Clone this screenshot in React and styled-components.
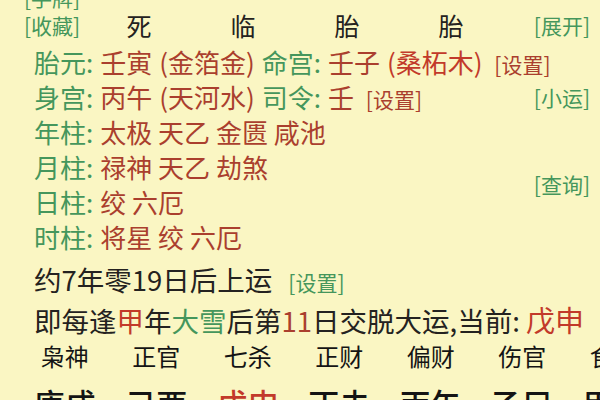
import React from 'react'
import styled, { createGlobalStyle } from 'styled-components'

const GlobalStyle = createGlobalStyle`
  html, body {
    margin: 0;
    padding: 0;
  }
  body {
    background: #faf6c3;
    font-family: "Noto Sans CJK SC", "Noto Sans", sans-serif;
  }
`

const GREEN = '#45965c'
const RED = '#aa3f2e'
const BRIGHT_RED = '#c23a2a'
const DARK = '#242220'

const Page = styled.div`
  width: 600px;
  height: 400px;
  overflow: hidden;
  background: #faf6c3;
  color: ${DARK};
`

const CutLine = styled.div`
  margin-top: -16px;
  padding-left: 24px;
  height: 28px;
  line-height: 26px;
  font-size: 21px;
  color: ${GREEN};
`

const TopRow = styled.div`
  display: grid;
  grid-template-columns: 63px repeat(4, 104px) 1fr;
  align-items: center;
  height: 26px;
  line-height: 26px;
  padding: 0 10px 0 24px;
`

const TopCell = styled.div`
  font-size: 25px;
  text-align: center;
`

const Link = styled.span`
  font-size: 21px;
  color: ${p => (p.$red ? RED : GREEN)};
  white-space: nowrap;
`

const RightLink = styled(Link)`
  justify-self: end;
`

const InfoRow = styled.div`
  display: flex;
  align-items: center;
  justify-content: space-between;
  height: 35px;
  padding: 0 10px 0 34px;
  margin-top: ${p => p.$gap || 0}px;
`

const Line = styled.div`
  display: flex;
  align-items: baseline;
  gap: 7px;
  font-size: 26px;
  white-space: nowrap;
`

const Label = styled.span`
  color: ${GREEN};
`

const Val = styled.span`
  color: ${p => (p.$bright ? BRIGHT_RED : RED)};
`

const PillarBlock = styled.div`
  display: flex;
  align-items: center;
  justify-content: space-between;
  padding-right: 10px;
`

const PillarList = styled.div`
  display: flex;
  flex-direction: column;
`

const PlainRow = styled.div`
  display: flex;
  align-items: baseline;
  gap: 16px;
  height: 35px;
  line-height: 35px;
  padding-left: 34px;
  font-size: 27.5px;
  white-space: nowrap;
  margin-top: ${p => p.$gap || 0}px;
`

const Accent = styled.span`
  color: ${p => p.$c};
  font-size: ${p => p.$size || 'inherit'};
`

const ColumnRow = styled.div`
  display: grid;
  grid-template-columns: repeat(7, 91.5px);
  padding-left: 19px;
  margin-top: ${p => p.$gap}px;
  height: ${p => p.$h}px;
  line-height: ${p => p.$h}px;
  font-size: ${p => p.$size}px;
  font-weight: ${p => p.$weight || 400};
  white-space: nowrap;
`

const Cell = styled.div`
  text-align: center;
  color: ${p => (p.$red ? BRIGHT_RED : '#141414')};
`

const gods = ['枭神', '正官', '七杀', '正财', '偏财', '伤官', '食神']
const yun = ['庚戌', '己酉', '戊申', '丁未', '丙午', '乙巳', '甲辰']

const pillars = [
  ['年柱:', '太极 天乙 金匮 咸池'],
  ['月柱:', '禄神 天乙 劫煞'],
  ['日柱:', '绞 六厄'],
  ['时柱:', '将星 绞 六厄'],
]

export default function App() {
  return (
    <Page>
      <GlobalStyle />
      <CutLine>[手牌]</CutLine>
      <TopRow>
        <Link>[收藏]</Link>
        <TopCell>死</TopCell>
        <TopCell>临</TopCell>
        <TopCell>胎</TopCell>
        <TopCell>胎</TopCell>
        <RightLink>[展开]</RightLink>
      </TopRow>

      <InfoRow $gap={6}>
        <Line>
          <Label>胎元:</Label>
          <Val>壬寅</Val>
          <Val>(金箔金)</Val>
          <Label>命宫:</Label>
          <Val>壬子</Val>
          <Val $bright>(桑柘木)</Val>
          <Link $red>&nbsp;[设置]</Link>
        </Line>
      </InfoRow>
      <InfoRow>
        <Line>
          <Label>身宫:</Label>
          <Val>丙午</Val>
          <Val>(天河水)</Val>
          <Label>司令:</Label>
          <Val>壬</Val>
          <Link $red>&nbsp;[设置]</Link>
        </Line>
        <Link>[小运]</Link>
      </InfoRow>

      <PillarBlock>
        <PillarList>
          {pillars.map(([k, v]) => (
            <InfoRow key={k}>
              <Line>
                <Label>{k}</Label>
                <Val>{v}</Val>
              </Line>
            </InfoRow>
          ))}
        </PillarList>
        <Link>[查询]</Link>
      </PillarBlock>

      <PlainRow $gap={8}>
        <span>约7年零19日后上运</span>
        <Link>[设置]</Link>
      </PlainRow>
      <PlainRow $gap={5}>
        <span>
          即每逢<Accent $c={BRIGHT_RED}>甲</Accent>年<Accent $c={GREEN}>大雪</Accent>后第
          <Accent $c={RED}>11</Accent>日交脱大运,当前: <Accent $c={BRIGHT_RED} $size="29px">戊申</Accent>
        </span>
      </PlainRow>

      <ColumnRow $gap={4} $h={30} $size={24}>
        {gods.map((g, i) => (
          <Cell key={i}>{g}</Cell>
        ))}
      </ColumnRow>
      <ColumnRow $gap={12} $h={40} $size={31} $weight={500}>
        {yun.map((g, i) => (
          <Cell key={i} $red={g === '戊申'}>{g}</Cell>
        ))}
      </ColumnRow>
    </Page>
  )
}
